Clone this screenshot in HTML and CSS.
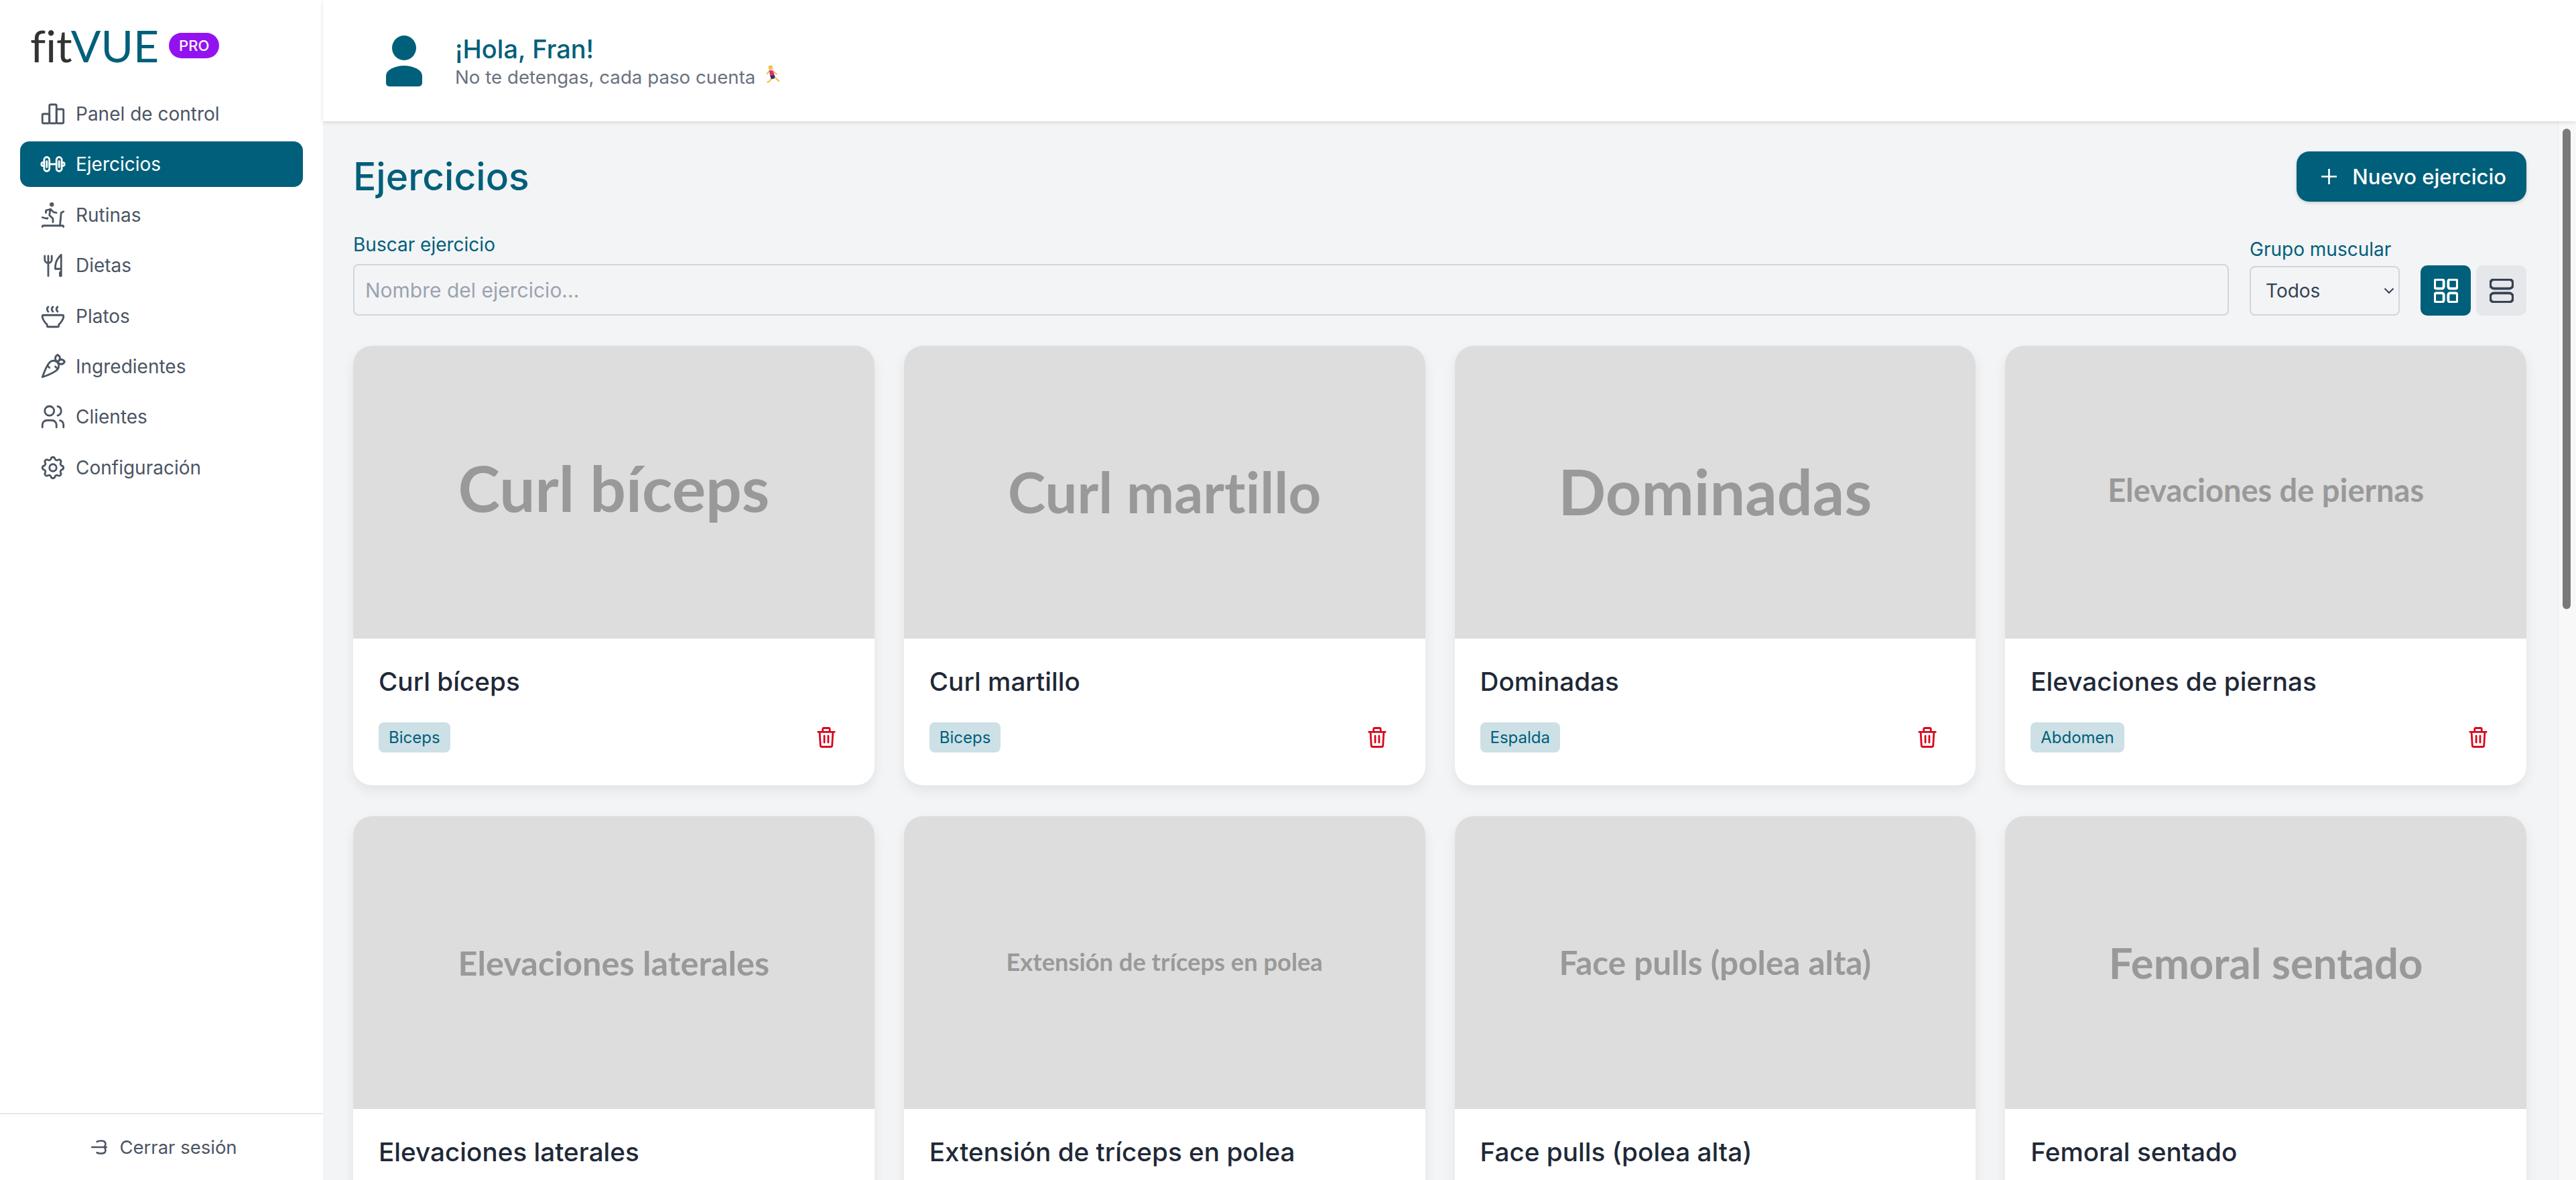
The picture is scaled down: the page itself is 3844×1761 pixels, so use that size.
FILE: index.html
```html
<!DOCTYPE html>
<html lang="es">
<head>
  <meta charset="UTF-8">
  <title>fitVUE - Ejercicios</title>
  <link rel="stylesheet" href="styles.css">
</head>
<body>

  <aside class="sidebar">
    <div class="logo">
      <span class="logo-text">fit<span class="logo-vue">VUE</span></span>
      <span class="pro-badge">PRO</span>
    </div>

    <nav class="nav">
      <a class="nav-item">
        <svg class="nav-icon" viewBox="0 0 24 24"><path d="M3 13a1 1 0 0 1 1-1h4a1 1 0 0 1 1 1v6a1 1 0 0 1-1 1H4a1 1 0 0 1-1-1z"/><path d="M15 9a1 1 0 0 1 1-1h4a1 1 0 0 1 1 1v10a1 1 0 0 1-1 1h-4a1 1 0 0 1-1-1z"/><path d="M9 5a1 1 0 0 1 1-1h4a1 1 0 0 1 1 1v14a1 1 0 0 1-1 1h-4a1 1 0 0 1-1-1z"/></svg>
        Panel de control
      </a>
      <a class="nav-item active">
        <svg class="nav-icon" viewBox="0 0 24 24"><path d="M9 12h6"/><rect x="4.500" y="6" width="4.500" height="12" rx="2.200"/><rect x="15" y="6" width="4.500" height="12" rx="2.200"/><path d="M6.750 9.500v5"/><path d="M17.250 9.500v5"/><path d="M4.500 10.500h-.8a1.500 1.500 0 0 0 0 3h.8"/><path d="M19.500 10.500h.8a1.500 1.500 0 0 1 0 3h-.8"/></svg>
        Ejercicios
      </a>
      <a class="nav-item">
        <svg class="nav-icon" viewBox="0 0 24 24"><path d="M10 3a1 1 0 1 0 2 0a1 1 0 0 0-2 0"/><path d="M3 14l4 1l.5-.5"/><path d="M12 18v-3l-3-2.923l.75-5.077"/><path d="M6 10v-2l4-1l2.500 2.500l2.500.5"/><path d="M21 22a1 1 0 0 0-1-1h-16a1 1 0 0 0-1 1"/><path d="M18 21l1-11l2-1"/></svg>
        Rutinas
      </a>
      <a class="nav-item">
        <svg class="nav-icon" viewBox="0 0 24 24"><path d="M19 3v12h-5c-.023-3.681.184-7.406 5-12zm0 12v6h-1v-3m-10-14v17m-3-17v3a3 3 0 1 0 6 0v-3"/></svg>
        Dietas
      </a>
      <a class="nav-item">
        <svg class="nav-icon" viewBox="0 0 24 24"><path d="M4 11h16a1 1 0 0 1 1 1v.5c0 1.500-2.517 5.573-4 6.500v1a1 1 0 0 1-1 1h-8a1 1 0 0 1-1-1v-1c-1.687-1.054-4-5-4-6.500v-.5a1 1 0 0 1 1-1z"/><path d="M12 4a2.400 2.400 0 0 0-1 2a2.400 2.400 0 0 0 1 2"/><path d="M16 4a2.400 2.400 0 0 0-1 2a2.400 2.400 0 0 0 1 2"/><path d="M8 4a2.400 2.400 0 0 0-1 2a2.400 2.400 0 0 0 1 2"/></svg>
        Platos
      </a>
      <a class="nav-item">
        <svg class="nav-icon" viewBox="0 0 24 24"><path d="M3 21s9.834-3.489 12.684-6.340a4.487 4.487 0 0 0 0-6.344a4.483 4.483 0 0 0-6.342 0c-2.860 2.861-6.342 12.684-6.342 12.684z"/><path d="M9 13l-1.500-1.500"/><path d="M16 14l-2-2"/><path d="M22 8s-1.140-2-3-2c-1.406 0-3 2-3 2s1.140 2 3 2s3-2 3-2z"/><path d="M16 2s-2 1.140-2 3s2 3 2 3s2-1.577 2-3c0-1.860-2-3-2-3z"/></svg>
        Ingredientes
      </a>
      <a class="nav-item">
        <svg class="nav-icon" viewBox="0 0 24 24"><path d="M5 7a4 4 0 1 0 8 0a4 4 0 1 0-8 0"/><path d="M3 21v-2a4 4 0 0 1 4-4h4a4 4 0 0 1 4 4v2"/><path d="M16 3.130a4 4 0 0 1 0 7.750"/><path d="M21 21v-2a4 4 0 0 0-3-3.850"/></svg>
        Clientes
      </a>
      <a class="nav-item">
        <svg class="nav-icon" viewBox="0 0 24 24"><path d="M10.325 4.317c.426-1.756 2.924-1.756 3.350 0a1.724 1.724 0 0 0 2.573 1.066c1.543-.94 3.310.826 2.370 2.370a1.724 1.724 0 0 0 1.065 2.572c1.756.426 1.756 2.924 0 3.350a1.724 1.724 0 0 0-1.066 2.573c.94 1.543-.826 3.310-2.370 2.370a1.724 1.724 0 0 0-2.572 1.065c-.426 1.756-2.924 1.756-3.350 0a1.724 1.724 0 0 0-2.573-1.066c-1.543.94-3.310-.826-2.370-2.370a1.724 1.724 0 0 0-1.065-2.572c-1.756-.426-1.756-2.924 0-3.350a1.724 1.724 0 0 0 1.066-2.573c-.94-1.543.826-3.310 2.370-2.370c1 .608 2.296.07 2.572-1.065z"/><path d="M9 12a3 3 0 1 0 6 0a3 3 0 0 0-6 0"/></svg>
        Configuración
      </a>
    </nav>

    <div class="logout">
      <svg class="logout-icon" viewBox="0 0 24 24"><path d="M1 12h20"/><path d="M8 4.500c2-1.500 9-2 11 .5c1 1.500 1 4.500-1 7"/><path d="M8 19.500c2 1.500 9 2 11-.5c1-1.500 1-4.500-1-7"/></svg>
      Cerrar sesión
    </div>
  </aside>

  <div class="page">
    <header class="topbar">
      <svg class="avatar" viewBox="0 0 54 76"><ellipse cx="27" cy="18.500" rx="18" ry="18.500"/><path d="M0 60a27 15 0 0 1 54 0v11a5 5 0 0 1-5 5H5a5 5 0 0 1-5-5z"/></svg>
      <div>
        <div class="greeting">¡Hola, Fran!</div>
        <div class="tagline">
          No te detengas, cada paso cuenta
          <svg class="runner" viewBox="0 0 24 26"><circle cx="10" cy="3.500" r="3" fill="#f5c04a"/><path d="M8 7l6 1l1.500 7l-6 1z" fill="#d6336c"/><path d="M9.500 15l6-1l1 4l-5.500 2z" fill="#2b2f6b"/><path d="M11 19l-3 4l-3 1" stroke="#f5c04a" stroke-width="2" fill="none"/><path d="M16 17l3 3l3 3" stroke="#f5c04a" stroke-width="2" fill="none"/><path d="M14 9l5 4" stroke="#f5c04a" stroke-width="2"/><path d="M8 8l-3 5" stroke="#f5c04a" stroke-width="2"/></svg>
        </div>
      </div>
    </header>

    <div class="page-body">
      <main class="main">
        <div class="title-row">
          <h1>Ejercicios</h1>
          <button class="btn-new">
            <svg class="plus-icon" viewBox="0 0 24 24"><path d="M12 1v22M1 12h22"/></svg>
            Nuevo ejercicio
          </button>
        </div>

        <div class="filters">
          <div class="field field-search">
            <label for="search">Buscar ejercicio</label>
            <input id="search" type="text" placeholder="Nombre del ejercicio...">
          </div>
          <div class="field field-group">
            <label for="group">Grupo muscular</label>
            <div class="select-wrap">
              <select id="group">
                <option>Todos</option>
              </select>
              <svg class="select-arrow" viewBox="0 0 16 10"><path d="M1.500 1.500L8 8l6.500-6.500"/></svg>
            </div>
          </div>
          <div class="view-toggle">
            <button class="view-btn active">
              <svg viewBox="0 0 32 32"><rect x="1" y="1" width="12" height="12" rx="2.500"/><rect x="19" y="1" width="12" height="12" rx="2.500"/><rect x="1" y="19" width="12" height="12" rx="2.500"/><rect x="19" y="19" width="12" height="12" rx="2.500"/></svg>
            </button>
            <button class="view-btn">
              <svg viewBox="0 0 32 32"><rect x="1" y="1" width="30" height="12" rx="5"/><rect x="1" y="19" width="30" height="12" rx="5"/></svg>
            </button>
          </div>
        </div>

        <div class="card-grid">
          <div class="card">
            <div class="card-img fit-a">Curl bíceps</div>
            <div class="card-body">
              <h3>Curl bíceps</h3>
              <div class="card-foot">
                <span class="tag">Biceps</span>
                <svg class="trash" viewBox="0 0 24 28"><path d="M1.500 7h21M7.500 7V3.500a1.500 1.500 0 0 1 1.500-1.500h6a1.500 1.500 0 0 1 1.500 1.500V7M3.500 7l1 17a2 2 0 0 0 2 2h11a2 2 0 0 0 2-2l1-17M9.500 12v8.500M14.500 12v8.500"/></svg>
              </div>
            </div>
          </div>
          <div class="card">
            <div class="card-img fit-b">Curl martillo</div>
            <div class="card-body">
              <h3>Curl martillo</h3>
              <div class="card-foot">
                <span class="tag">Biceps</span>
                <svg class="trash" viewBox="0 0 24 28"><path d="M1.500 7h21M7.500 7V3.500a1.500 1.500 0 0 1 1.500-1.500h6a1.500 1.500 0 0 1 1.500 1.500V7M3.500 7l1 17a2 2 0 0 0 2 2h11a2 2 0 0 0 2-2l1-17M9.500 12v8.500M14.500 12v8.500"/></svg>
              </div>
            </div>
          </div>
          <div class="card">
            <div class="card-img fit-c">Dominadas</div>
            <div class="card-body">
              <h3>Dominadas</h3>
              <div class="card-foot">
                <span class="tag">Espalda</span>
                <svg class="trash" viewBox="0 0 24 28"><path d="M1.500 7h21M7.500 7V3.500a1.500 1.500 0 0 1 1.500-1.500h6a1.500 1.500 0 0 1 1.500 1.500V7M3.500 7l1 17a2 2 0 0 0 2 2h11a2 2 0 0 0 2-2l1-17M9.500 12v8.500M14.500 12v8.500"/></svg>
              </div>
            </div>
          </div>
          <div class="card">
            <div class="card-img fit-d">Elevaciones de piernas</div>
            <div class="card-body">
              <h3>Elevaciones de piernas</h3>
              <div class="card-foot">
                <span class="tag">Abdomen</span>
                <svg class="trash" viewBox="0 0 24 28"><path d="M1.500 7h21M7.500 7V3.500a1.500 1.500 0 0 1 1.500-1.500h6a1.500 1.500 0 0 1 1.500 1.500V7M3.500 7l1 17a2 2 0 0 0 2 2h11a2 2 0 0 0 2-2l1-17M9.500 12v8.500M14.500 12v8.500"/></svg>
              </div>
            </div>
          </div>
          <div class="card">
            <div class="card-img fit-e">Elevaciones laterales</div>
            <div class="card-body">
              <h3>Elevaciones laterales</h3>
            </div>
          </div>
          <div class="card">
            <div class="card-img fit-f">Extensión de tríceps en polea</div>
            <div class="card-body">
              <h3>Extensión de tríceps en polea</h3>
            </div>
          </div>
          <div class="card">
            <div class="card-img fit-g">Face pulls (polea alta)</div>
            <div class="card-body">
              <h3>Face pulls (polea alta)</h3>
            </div>
          </div>
          <div class="card">
            <div class="card-img fit-h">Femoral sentado</div>
            <div class="card-body">
              <h3>Femoral sentado</h3>
            </div>
          </div>
        </div>
      </main>

      <div class="scroll-track">
        <div class="scroll-thumb"></div>
      </div>
    </div>
  </div>

</body>
</html>
```

FILE: styles.css
```css
html, body {
  margin: 0;
  height: 100%;
  overflow: hidden;
}

body {
  display: flex;
  font-family: Inter, "Noto Sans", sans-serif;
  font-variant-ligatures: none;
  background-color: #f3f4f6;
  color: #1f2937;
}

/* sidebar */

.sidebar {
  width: 482px;
  flex-shrink: 0;
  display: flex;
  flex-direction: column;
  background-color: #fff;
}

.logo {
  display: flex;
  align-items: center;
  height: 136px;
  padding: 0 0 0 45px;
  box-sizing: border-box;
}

.logo-text {
  font-family: Lato, sans-serif;
  font-size: 66px;
  line-height: 1;
  color: #333;
}

.logo-vue {
  color: #005f7a;
}

.pro-badge {
  margin-left: 15px;
  padding: 0 15px;
  height: 38px;
  line-height: 38px;
  border-radius: 19px;
  background-color: #9313f0;
  color: #fff;
  font-size: 22px;
  font-weight: 500;
}

.nav {
  flex: 1;
  display: flex;
  flex-direction: column;
  gap: 7.4px;
  padding: 0 30px;
}

.nav-item {
  display: flex;
  align-items: center;
  gap: 13px;
  height: 68px;
  padding-left: 28px;
  border-radius: 14px;
  font-size: 28px;
  color: #4b5563;
}

.nav-item.active {
  background-color: #005f7a;
  color: #fff;
}

.nav-icon {
  width: 42px;
  height: 42px;
  flex-shrink: 0;
  fill: none;
  stroke: currentColor;
  stroke-width: 1.6;
  stroke-linecap: round;
  stroke-linejoin: round;
}

.logout {
  display: flex;
  align-items: center;
  justify-content: center;
  gap: 16px;
  height: 98px;
  padding-left: 8px;
  border-top: 2px solid #e5e7eb;
  font-size: 27.5px;
  color: #4b5563;
}

.logout-icon {
  width: 26px;
  height: 30px;
  fill: none;
  stroke: currentColor;
  stroke-width: 2.4;
  stroke-linecap: round;
  stroke-linejoin: round;
}

/* right side */

.page {
  flex: 1;
  min-width: 0;
  display: flex;
  flex-direction: column;
}

.topbar {
  position: relative;
  display: flex;
  align-items: center;
  gap: 49px;
  height: 181px;
  flex-shrink: 0;
  padding-left: 94px;
  box-sizing: border-box;
  background-color: #fff;
  box-shadow: 0 2px 6px rgba(0,0,0,0.12);
}

.avatar {
  width: 54px;
  height: 76px;
  fill: #005f7a;
}

.greeting {
  font-size: 38px;
  font-weight: 500;
  line-height: 48px;
  color: #005f7a;
}

.tagline {
  display: flex;
  align-items: center;
  gap: 12px;
  font-size: 27.7px;
  line-height: 36px;
  color: #6b7280;
}

.runner {
  width: 26px;
  height: 28px;
  margin-top: -8px;
}

.page-body {
  flex: 1;
  min-height: 0;
  display: flex;
}

.main {
  flex: 1;
  min-width: 0;
  overflow: hidden;
  padding: 45px 47px 0 45px;
}

.scroll-track {
  width: 27px;
  flex-shrink: 0;
  box-sizing: border-box;
  padding: 11px 8px 0 6px;
  background-color: #f8f8f8;
  border-left: 1px solid #eee;
}

.scroll-thumb {
  height: 717px;
  border-radius: 7px;
  background-color: #7a7a7a;
}

.title-row {
  display: flex;
  justify-content: space-between;
  align-items: center;
  height: 75px;
}

h1 {
  margin: 0;
  font-size: 57px;
  font-weight: 500;
  color: #005f7a;
}

.btn-new {
  display: flex;
  align-items: center;
  gap: 22px;
  height: 75px;
  padding: 0 30px 0 36px;
  border: none;
  border-radius: 19px;
  background-color: #005f7a;
  color: #fff;
  font-family: inherit;
  font-size: 31px;
  font-weight: 500;
  box-shadow: 0 2px 5px rgba(0,0,0,0.15);
}

.plus-icon {
  width: 25px;
  height: 25px;
  fill: none;
  stroke: #fff;
  stroke-width: 2.6;
}

.filters {
  display: flex;
  align-items: flex-end;
  margin-top: 44px;
  height: 126px;
}

.field label {
  display: block;
  font-size: 28px;
  color: #005f7a;
}

.field-search {
  flex: 1;
}

.field-search label {
  margin-bottom: 10px;
  line-height: 37px;
}

.field-search input {
  display: block;
  width: 100%;
  height: 77px;
  box-sizing: border-box;
  padding: 0 16px;
  border: 2px solid #d1d5db;
  border-radius: 8px;
  background: transparent;
  font-family: inherit;
  font-size: 30px;
  color: #1f2937;
}

.field-search input::placeholder {
  color: #9ca3af;
}

.field-group {
  width: 224px;
  margin-left: 31px;
}

.field-group label {
  margin-bottom: 8px;
  line-height: 34px;
}

.select-wrap {
  position: relative;
}

.select-wrap select {
  display: block;
  width: 100%;
  height: 74px;
  box-sizing: border-box;
  padding: 0 22px;
  border: 2px solid #d1d5db;
  border-radius: 8px;
  background: transparent;
  font-family: inherit;
  font-size: 28px;
  color: #374151;
  appearance: none;
}

.select-arrow {
  position: absolute;
  top: 32px;
  right: 8px;
  width: 16px;
  height: 10px;
  fill: none;
  stroke: #374151;
  stroke-width: 2;
}

.view-toggle {
  display: flex;
  gap: 8px;
  margin-left: 31px;
}

.view-btn {
  display: flex;
  align-items: center;
  justify-content: center;
  width: 75px;
  height: 75px;
  padding: 0;
  border: none;
  border-radius: 10px;
  background-color: #e5e7eb;
  color: #374151;
}

.view-btn.active {
  background-color: #005f7a;
  color: #fff;
}

.view-btn svg {
  width: 36px;
  height: 36px;
  fill: none;
  stroke: currentColor;
  stroke-width: 3.4;
}

/* cards */

.card-grid {
  display: grid;
  grid-template-columns: repeat(4, 1fr);
  column-gap: 44px;
  row-gap: 46px;
  margin-top: 45px;
}

.card {
  height: 656px;
  border-radius: 28px;
  overflow: hidden;
  background-color: #fff;
  box-shadow: 0 8px 18px rgba(0,0,0,0.07);
}

.card-img {
  display: flex;
  align-items: center;
  justify-content: center;
  height: 437px;
  box-sizing: border-box;
  background-color: #ddd;
  color: #999;
  font-family: Lato, sans-serif;
  font-weight: 700;
}

.fit-a { font-size: 94.5px; padding-bottom: 14px; }
.fit-b { font-size: 85px; padding-bottom: 4px; }
.fit-c { font-size: 93.5px; padding-bottom: 4px; }
.fit-d { font-size: 47px; padding-bottom: 8px; }
.fit-e { font-size: 50.5px; }
.fit-f { font-size: 36.3px; padding-bottom: 4px; }
.fit-g { font-size: 49.5px; padding-bottom: 2px; }
.fit-h { font-size: 63.5px; }

.card-body {
  padding: 38px 38px 0;
}

.card-body h3 {
  margin: 0;
  font-size: 38.7px;
  font-weight: 500;
  line-height: 52px;
  color: #1f2937;
}

.card-foot {
  display: flex;
  justify-content: space-between;
  align-items: center;
  margin-top: 35px;
  padding-right: 20px;
}

.tag {
  height: 45px;
  line-height: 45px;
  padding: 0 15px;
  border-radius: 8px;
  background-color: #cce0e6;
  color: #005f7a;
  font-size: 24px;
}

.trash {
  width: 28px;
  height: 33px;
  fill: none;
  stroke: #d8071e;
  stroke-width: 2.4;
  stroke-linecap: round;
  stroke-linejoin: round;
}
```
